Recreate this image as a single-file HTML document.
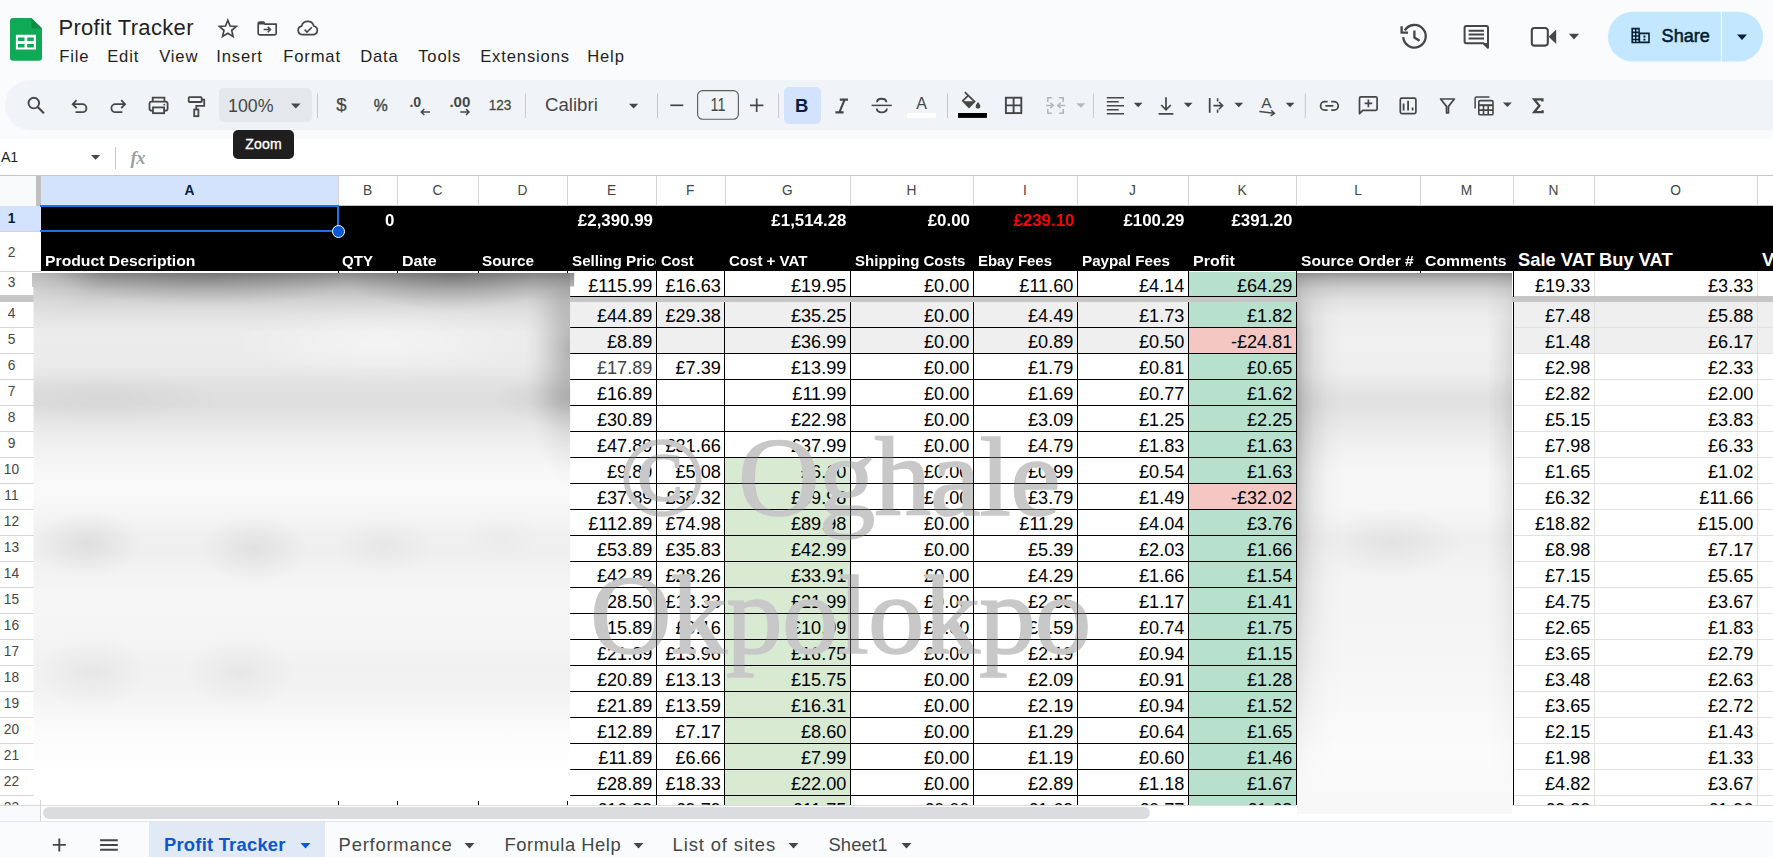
<!DOCTYPE html>
<html><head><meta charset="utf-8"><title>Profit Tracker</title>
<style>
*{box-sizing:border-box;margin:0;padding:0}
html,body{width:1773px;height:857px;overflow:hidden;background:#f9fbfd;font-family:"Liberation Sans",sans-serif;color:#1f1f1f}
body{position:relative}
.abs{position:absolute}
#title{position:absolute;left:58.4px;top:14px;font-size:22px;line-height:28px;color:#1f1f1f;letter-spacing:.33px;white-space:nowrap}
.menu{position:absolute;top:45.6px;margin-left:-.8px;letter-spacing:.85px;font-size:16.6px;line-height:22px;color:#1f1f1f;white-space:nowrap}
#toolbar{position:absolute;left:5px;top:80px;width:1800px;height:50px;border-radius:25px;background:#f0f4f9}
.tsep{position:absolute;top:93px;width:1px;height:25px;background:#c7c7c7}
.ttxt{position:absolute;font-size:17.5px;line-height:22px;color:#444746;white-space:nowrap}
svg.ic{position:absolute;overflow:visible}
#fbar{position:absolute;left:0;top:139px;width:1773px;height:37px;background:#fff}
#grid{position:absolute;left:0;top:0;width:1773px;height:805px;overflow:hidden;clip-path:inset(175px 0 0 0)}
#gridbg{position:absolute;left:0;top:175px;width:1773px;height:630px;background:#fff}
.chdr-bg{position:absolute;left:0;top:175px;width:1773px;height:31px;background:#fff;border-top:1px solid #c7c7c7;border-bottom:1px solid #c7c7c7}
.ch{position:absolute;top:176px;height:29px;line-height:30.5px;text-align:center;font-size:13.75px;color:#444746}
.ch.sel{background:#d3e3fd;color:#041e49;font-weight:bold}
.rh{position:absolute;left:0;width:41px;text-align:center;font-size:13.75px;color:#444746;background:#fff;padding-right:18px}
.rh.sel{background:#d3e3fd;color:#041e49;font-weight:bold}
.vl{position:absolute;width:1px;background:#d5d5d5}
.hl{position:absolute;height:1px;background:#d5d5d5}
.bl{position:absolute;background:#000}
.blk{position:absolute;background:#000}
.bg{position:absolute}
.c{position:absolute;text-align:right;padding-right:3.7px;font-size:18.1px;color:#000;white-space:nowrap;overflow:hidden}
.h1{position:absolute;top:205.5px;height:25px;line-height:30px;text-align:right;font-weight:bold;color:#fff;font-size:16.9px;white-space:nowrap}
.h2{position:absolute;top:246px;height:25px;line-height:30px;font-weight:bold;color:#fff;font-size:16px;white-space:nowrap;overflow:hidden;}
.h2 span{display:inline-block;transform-origin:0 78%}.h1 span{display:inline-block;transform-origin:100% 78%}
.h2a{position:absolute;top:245px;height:26px;line-height:29px;font-weight:bold;color:#fff;font-size:18.33px;white-space:nowrap}
.blur{position:absolute;overflow:hidden;background:#f1f1f1}
.bb{position:absolute}
.wm{position:absolute;font-family:"Liberation Serif",serif;font-size:113px;line-height:124px;color:#c8c8c8;-webkit-text-stroke:1.7px #c8c8c8;white-space:nowrap}
.frz{position:absolute;left:0;top:296.4px;width:1773px;height:5.3px;background:#c6c6c6}
.tab{position:absolute;top:822px;height:35px;font-size:18.4px;line-height:45px;color:#444746;white-space:nowrap;font-weight:bold}
</style></head><body>

<!-- ===== header ===== -->
<svg class="ic" style="left:10.1px;top:18.4px" width="32" height="42.8" viewBox="0 0 32 42.8">
<path d="M3 0h18.4L32 10.6v29.2a3 3 0 0 1-3 3H3a3 3 0 0 1-3-3V3a3 3 0 0 1 3-3z" fill="#10a955"/>
<path d="M21.4 0L32 10.6H24a2.6 2.6 0 0 1-2.6-2.6z" fill="#0a8c43"/>
<path d="M5.9 16.8h20.1v14.8H5.900000000000001z M7.9 19.6v3.4h6.6v-3.4z M17.2 19.6v3.4h6.6v-3.4z M7.9 25.9v3.5h6.6v-3.5z M17.2 25.9v3.5h6.6v-3.5z" fill="#fff" fill-rule="evenodd"/>
</svg>
<div id="title">Profit Tracker</div>
<div class="menu" style="left:60px">File</div>
<div class="menu" style="left:108px">Edit</div>
<div class="menu" style="left:160px">View</div>
<div class="menu" style="left:217px">Insert</div>
<div class="menu" style="left:284px">Format</div>
<div class="menu" style="left:361px">Data</div>
<div class="menu" style="left:419px">Tools</div>
<div class="menu" style="left:481px">Extensions</div>
<div class="menu" style="left:588px">Help</div>
<svg class="ic" style="left:0;top:0" width="1773" height="78" viewBox="0 0 1773 78" fill="none" stroke="#444746" stroke-width="1.8" font-family="Liberation Sans, sans-serif">
<!-- star -->
<path d="M227.8 20.3L230.2 26.0L236.3 26.4L231.7 30.4L233.1 36.4L227.8 33.2L222.6 36.4L224.0 30.4L219.4 26.4L225.5 26.0Z" stroke-width="1.7" stroke-linejoin="miter"/>
<!-- folder move -->
<path d="M264.8 24.1H276.2V33.2A1.6 1.6 0 0 1 274.6 34.8H259.8A1.6 1.6 0 0 1 258.2 33.2V23.6A1.6 1.6 0 0 1 259.8 22H263.6Z" stroke-width="1.7" stroke-linejoin="round"/><path d="M258.4 22h5.6l1.4 2.4h-7z" fill="#444746" stroke="none"/>
<path d="M263.6 29.6H270.2M267.8 26.9L270.5 29.6L267.8 32.3" stroke-width="1.5"/>
<!-- cloud done -->
<path d="M302.2 34.6A4.3 4.3 0 0 1 301.6 26.1A6.3 6.3 0 0 1 313.8 26A4.4 4.4 0 0 1 313.8 34.6Z" stroke-width="1.7" stroke-linejoin="round"/><path d="M304.6 29.6L307 32L311.8 27.2" stroke-width="1.6"/>
<!-- history -->
<g transform="translate(0,1.2)"><path d="M1404.8 29.2A11.3 11.3 0 1 1 1403.2 36" stroke-width="2.3"/><path d="M1401.6 25V31.4H1408" stroke-width="2.3"/><path d="M1414.4 29.4V36.4L1419.6 39.6" stroke-width="2.3"/></g>
<!-- comments -->
<path d="M1488 47.8L1483.4 43.2H1466.2A1.6 1.6 0 0 1 1464.6 41.6V27.6A1.6 1.6 0 0 1 1466.2 26H1486.4A1.6 1.6 0 0 1 1488 27.6Z" stroke-width="2" stroke-linejoin="round"/><path d="M1468.6 30.7H1484M1468.6 34.6H1484M1468.6 38.5H1484" stroke-width="2"/><path d="M1488 48.6V43h-5.4z" fill="#444746" stroke="none"/>
<!-- video -->
<path d="M1531.8 30.6A2.6 2.6 0 0 1 1534.4 28H1545.2A2.6 2.6 0 0 1 1547.8 30.6V43A2.6 2.6 0 0 1 1545.2 45.600000000000001H1534.4A2.6 2.6 0 0 1 1531.8 43Z" stroke-width="2.1"/><path d="M1548.6 36.8L1556.2 29.6V44Z" fill="#444746" stroke="none"/>
<path d="M1568.9 33.8h10.2l-5.1 5.6z" fill="#444746" stroke="none"/>
<!-- share -->
<rect x="1608" y="11.8" width="155" height="49.8" rx="24.9" fill="#c2e7ff" stroke="none"/>
<path d="M1721.4 11.8V61.6" stroke="#f9fbfd" stroke-width="1.2"/>
<path d="M1737 34.4h10l-5 5.5z" fill="#001d35" stroke="none"/>
<g fill="#001d35" stroke="none"><path d="M1631.4 27.8h8.4v4.6h10v10.8h-18.4z M1633 29.6v2h2v-2z M1636.4 29.6v2h2v-2z M1633 33.2v2h2v-2z M1636.4 33.2v2h2v-2z M1633 36.800000000000004v2h2v-2z M1636.4 36.800000000000004v2h2v-2z M1633 40.2v1.6h2v-1.6z M1636.4 40.2v1.6h2v-1.6z M1640.2 34.2v7.4h8v-7.4z" fill-rule="evenodd"/><path d="M1643.400000000000001 35.6h2v1.8h-2z M1643.4 38.8h2v1.8h-2z"/></g>
<text x="1661.6" y="41.8" font-size="17.5" fill="#001d35" stroke="#001d35" stroke-width=".55" textLength="48.2" lengthAdjust="spacingAndGlyphs">Share</text>
</svg>


<!-- ===== toolbar ===== -->
<div id="toolbar"></div>
<svg class="ic" style="left:0;top:0" width="1773" height="180" viewBox="0 0 1773 180" fill="none" stroke="#444746" stroke-width="1.8" font-family="Liberation Sans, sans-serif">
<!-- search -->
<circle cx="33.8" cy="103.1" r="5.3" stroke-width="1.9"/><path d="M37.7 107.1L43.9 113.3" stroke-width="2.1"/>
<!-- undo -->
<path d="M76.6 100.2L72.7 104.2L76.6 108.2M73 104.2H82.4A4 4 0 0 1 82.4 112.2H75.5"/>
<!-- redo -->
<path d="M121.2 100.2L125.1 104.2L121.2 108.2M124.8 104.2H115.4A4 4 0 0 0 115.4 112.2H122.3"/>
<!-- print -->
<path d="M152.7 101.5V97.6H164.4V101.5"/><rect x="149.5" y="101.6" width="18.1" height="9" rx="2.2"/><rect x="153" y="107.4" width="11.1" height="5.8" fill="#f0f4f9"/><circle cx="164.3" cy="104.6" r="0.9" fill="#444746" stroke="none"/>
<!-- paint format -->
<rect x="188.7" y="97.2" width="13" height="4.8" rx="0.8"/><path d="M201.7 99.6H204.2V105.8H196.3V109.5"/><rect x="194.2" y="109.5" width="4.2" height="6.7"/>
<!-- zoom box -->
<rect x="219" y="88" width="93" height="34" rx="5" fill="#e4e8ed" stroke="none"/>
<text x="228" y="111.8" font-size="17.5" fill="#444746" stroke="none" textLength="45.5" lengthAdjust="spacingAndGlyphs">100%</text>
<path d="M291 103.5h9.6l-4.8 5z" fill="#444746" stroke="none"/>
<path d="M317.5 93.5V118" stroke="#c7c7c7" stroke-width="1"/>
<!-- $ % -->
<text x="341.4" y="111.4" font-size="18.6" fill="#444746" stroke="#444746" stroke-width=".2" text-anchor="middle">$</text>
<text x="380.7" y="111.2" font-size="16.5" fill="#444746" stroke="#444746" stroke-width=".4" text-anchor="middle" textLength="14" lengthAdjust="spacingAndGlyphs">%</text>
<text x="409.4" y="107" font-size="14.5" font-weight="bold" fill="#444746" stroke="none" textLength="11.8" lengthAdjust="spacingAndGlyphs">.0</text>
<path d="M430 112H421.3M424.3 109L421.3 112L424.3 115" stroke-width="1.5"/>
<text x="449.4" y="107" font-size="14.5" font-weight="bold" fill="#444746" stroke="none" textLength="21" lengthAdjust="spacingAndGlyphs">.00</text>
<path d="M460.3 112H469M466 109L469 112L466 115" stroke-width="1.5"/>
<text x="488.8" y="109.8" font-size="14.5" fill="#444746" stroke="#444746" stroke-width="0.3" textLength="22.6" lengthAdjust="spacingAndGlyphs">123</text>
<path d="M525.4 93.5V118" stroke="#c7c7c7" stroke-width="1"/>
<text x="545" y="111" font-size="17.5" fill="#444746" stroke="none" textLength="52.8" lengthAdjust="spacingAndGlyphs">Calibri</text>
<path d="M629 103.7h9.2l-4.6 4.8z" fill="#444746" stroke="none"/>
<path d="M657.5 93.5V118" stroke="#c7c7c7" stroke-width="1"/>
<!-- font size -->
<path d="M670.3 105.3H683.3" stroke-width="1.7"/>
<rect x="697.6" y="90.6" width="40.8" height="28.6" rx="5" stroke-width="1.15" stroke="#5b5e5d" fill="#f0f4f9"/>
<text x="718" y="110.8" font-size="17.5" fill="#444746" stroke="none" text-anchor="middle" textLength="15" lengthAdjust="spacingAndGlyphs">11</text>
<path d="M750 105.3H763.4M756.7 98.6V112" stroke-width="1.7"/>
<path d="M778.6 93.5V118" stroke="#c7c7c7" stroke-width="1"/>
<!-- B I S A -->
<rect x="784" y="87" width="37" height="37" rx="5" fill="#d3e3fd" stroke="none"/>
<text x="801.6" y="112" font-size="18.5" font-weight="bold" fill="#041e49" stroke="none" text-anchor="middle">B</text>
<path d="M839.8 99.6H848M835.4 112.4H843.6M844.6 99.6L839.4 112.4" stroke-width="2.1"/>
<path d="M871.6 105.4H891.8" stroke-width="1.5"/><path d="M886.4 102.2C886.2 97.6 877 97.6 877 102.2M876.8 108.6C876.8 113.6 886.9 113.6 886.9 108.6" stroke-width="1.9"/>
<text x="921.6" y="109.2" font-size="16" fill="#444746" stroke="none" text-anchor="middle">A</text>
<rect x="907" y="113" width="29" height="5" fill="#fff" stroke="none"/>
<path d="M947.5 93.5V118" stroke="#c7c7c7" stroke-width="1"/>
<!-- fill -->
<path d="M964.8 92.2L974.6 101.6L969 107.2L962.8 100.8L968.6 95.2" stroke-width="1.7"/><path d="M963 101.2H974.6L969 107z" fill="#444746" stroke="none"/>
<path d="M978 102c1.5 1.9 2.4 3.2 2.4 4.3a2.4 2.4 0 0 1-4.8 0c0-1.1.9-2.4 2.400000000000002-4.3z" fill="#444746" stroke="none"/>
<rect x="958" y="113" width="29" height="4.9" fill="#000" stroke="none"/>
<!-- borders -->
<rect x="1005.9" y="97.7" width="15.4" height="15.4" stroke-width="1.9"/><path d="M1013.6 97.7V113.1M1005.9 105.4H1021.3" stroke-width="1.9"/>
<!-- merge (disabled) -->
<g stroke="#b3b7bb" stroke-width="1.6"><path d="M1052 97.8H1047.8V102M1047.8 109V113.2H1052M1059 97.8H1063.2V102M1063.2 109V113.2H1059M1046 105.5H1053.2M1050.4 102.7L1053.2 105.5L1050.4 108.3M1065 105.5H1057.8M1060.6 102.7L1057.8 105.5L1060.6 108.3"/></g>
<path d="M1076.3 103.2h9l-4.5 4.6z" fill="#b3b7bb" stroke="none"/>
<path d="M1093.4 93.5V118" stroke="#c7c7c7" stroke-width="1"/>
<!-- align -->
<path d="M1106.8 97.7H1124M1106.8 101.8H1118.7M1106.8 105.8H1124M1106.8 109.8H1118.7M1106.8 113.8H1124" stroke-width="1.5"/>
<path d="M1133.8 102.8h8.8l-4.4 4.5z" fill="#444746" stroke="none"/>
<!-- valign -->
<path d="M1166 97.2V109.6M1161.2 105L1166 109.8L1170.8 105M1158.6 113.8H1173.4" stroke-width="1.7"/>
<path d="M1183.8 102.8h8.8l-4.4 4.5z" fill="#444746" stroke="none"/>
<!-- wrap overflow -->
<path d="M1209.7 98V112.8" stroke-width="1.8"/><path d="M1213.4 105.6H1222.4M1219 102L1222.6 105.6L1219 109.2M1217.6 98.2V101.6M1217.6 109.4V112.8" stroke-width="1.6"/>
<path d="M1234.4 102.8h8.8l-4.4 4.5z" fill="#444746" stroke="none"/>
<!-- rotate -->
<text x="1266.5" y="108.2" font-size="15.5" fill="#444746" stroke="none" text-anchor="middle">A</text>
<path d="M1259.4 111.4L1274 113.2M1271.2 110.2L1274.4 113.3L1270.6 115.8" stroke-width="1.5"/>
<path d="M1285.7 102.8h8.8l-4.4 4.5z" fill="#444746" stroke="none"/>
<path d="M1305.3 93.5V118" stroke="#c7c7c7" stroke-width="1"/>
<!-- link -->
<path d="M1327.6 101.7H1324.8A4.2 4.2 0 0 0 1324.8 110.1H1327.6M1331.2 101.7H1334A4.2 4.2 0 0 1 1334 110.1H1331.2M1325.4 105.9H1333.4" stroke-width="1.8"/>
<!-- add comment -->
<path d="M1359.5 113.6V98.4A1.5 1.5 0 0 1 1361 96.9H1375.6A1.5 1.5 0 0 1 1377.1 98.4V108.8A1.5 1.5 0 0 1 1375.6 110.3H1362.8Z" stroke-width="1.7" stroke-linejoin="round"/><path d="M1364.6 103.4H1372.2M1368.4 99.6V107.2" stroke-width="1.7"/>
<!-- chart -->
<rect x="1400.3" y="98.2" width="15.6" height="15.4" rx="1.6" stroke-width="1.7"/><path d="M1403.6 103.4V110.6M1408.1 100.8V110.6M1412.6 107.4V110.6" stroke-width="1.8"/>
<!-- filter -->
<path d="M1440.6 99H1454.4L1448.5 106.4V112.8H1446.5V106.4Z" stroke-width="1.7" stroke-linejoin="round"/>
<!-- table -->
<path d="M1475.1 108.6V98.4A1.4 1.4 0 0 1 1476.5 97H1489.4" stroke-width="1.5"/><rect x="1478.8" y="100.6" width="14.2" height="14.2" rx="1.4" stroke-width="1.6"/><path d="M1478.8 105.2H1493" stroke-width="2"/><path d="M1478.8 110.1H1493M1483.5 105.2V114.8M1488.2 105.2V114.8" stroke-width="1.6"/>
<path d="M1502.9 102.6h9l-4.5 4.5z" fill="#444746" stroke="none"/>
<!-- sigma -->
<path d="M1542.4 101.4V99.4H1534.2L1539.4 105.8L1534.2 112.2H1542.6V110.2" stroke-width="2.3" stroke-linejoin="miter"/>
</svg>
<div class="abs" style="z-index:5;left:233px;top:129.5px;width:61px;height:29.5px;border-radius:5px;background:#1f1f1f"></div>
<div class="abs" style="z-index:6;left:233px;top:129.5px;width:61px;height:29.5px;line-height:29.5px;text-align:center;color:#fff;font-size:14px;-webkit-text-stroke:.35px #fff;letter-spacing:.2px"><span style="display:inline-block">Zoom</span></div>


<!-- ===== formula bar ===== -->
<div id="fbar"></div>
<div class="abs" style="left:1px;top:147px;letter-spacing:-.4px;font-size:14.3px;line-height:20px;color:#1f1f1f">A1</div>
<svg class="ic" style="left:90.6px;top:155px" width="9.2" height="4.8" viewBox="0 0 9.2 4.8"><path d="M0 0h9.2L4.6 4.8z" fill="#444746"/></svg>
<div class="abs" style="left:115px;top:147px;width:1px;height:22px;background:#c7c7c7"></div>
<div class="abs" style="left:130.4px;top:147px;font-family:'Liberation Serif',serif;font-style:italic;font-size:18.5px;line-height:22px;color:#9aa0a6;font-weight:bold;letter-spacing:-.2px">fx</div>

<!-- ===== grid ===== -->
<div id="gridbg"></div>
<div id="grid">
<div class="chdr-bg"></div>
<div class="ch sel" style="left:41px;width:297px">A</div>
<div class="ch" style="left:338px;width:59px">B</div>
<div class="ch" style="left:397px;width:81px">C</div>
<div class="ch" style="left:478px;width:89px">D</div>
<div class="ch" style="left:567px;width:89px">E</div>
<div class="ch" style="left:656px;width:68.5px">F</div>
<div class="ch" style="left:724.5px;width:125.5px">G</div>
<div class="ch" style="left:850px;width:123px">H</div>
<div class="ch" style="left:973px;width:104px">I</div>
<div class="ch" style="left:1077px;width:111px">J</div>
<div class="ch" style="left:1188px;width:108px">K</div>
<div class="ch" style="left:1296px;width:124px">L</div>
<div class="ch" style="left:1420px;width:93px">M</div>
<div class="ch" style="left:1513px;width:81px">N</div>
<div class="ch" style="left:1594px;width:163px">O</div>
<div class="vl" style="left:338px;top:176px;height:30px"></div>
<div class="vl" style="left:397px;top:176px;height:30px"></div>
<div class="vl" style="left:478px;top:176px;height:30px"></div>
<div class="vl" style="left:567px;top:176px;height:30px"></div>
<div class="vl" style="left:656px;top:176px;height:30px"></div>
<div class="vl" style="left:724.5px;top:176px;height:30px"></div>
<div class="vl" style="left:850px;top:176px;height:30px"></div>
<div class="vl" style="left:973px;top:176px;height:30px"></div>
<div class="vl" style="left:1077px;top:176px;height:30px"></div>
<div class="vl" style="left:1188px;top:176px;height:30px"></div>
<div class="vl" style="left:1296px;top:176px;height:30px"></div>
<div class="vl" style="left:1420px;top:176px;height:30px"></div>
<div class="vl" style="left:1513px;top:176px;height:30px"></div>
<div class="vl" style="left:1594px;top:176px;height:30px"></div>
<div class="vl" style="left:1757px;top:176px;height:30px"></div>
<div class="vl" style="left:1800px;top:176px;height:30px"></div>
<div class="bg" style="left:0;top:176px;width:36.5px;height:29.5px;background:#f8f9fa"></div>
<div class="bg" style="left:36.4px;top:176px;width:4.4px;height:29.5px;background:#c0c0c0"></div>
<div class="rh sel" style="top:205.5px;height:26.0px;line-height:25.4px">1</div>
<div class="hl" style="left:0;width:41px;top:231px"></div>
<div class="rh" style="top:231.5px;height:40.0px;line-height:41.0px">2</div>
<div class="hl" style="left:0;width:41px;top:271px"></div>
<div class="rh" style="top:271.5px;height:25.5px;line-height:21.0px">3</div>
<div class="hl" style="left:0;width:41px;top:296px"></div>
<div class="rh" style="top:302.0px;height:26.0px;line-height:23.5px">4</div>
<div class="hl" style="left:0;width:41px;top:327px"></div>
<div class="rh" style="top:328.0px;height:26.0px;line-height:23.5px">5</div>
<div class="hl" style="left:0;width:41px;top:353px"></div>
<div class="rh" style="top:354.0px;height:26.0px;line-height:23.5px">6</div>
<div class="hl" style="left:0;width:41px;top:379px"></div>
<div class="rh" style="top:380.0px;height:26.0px;line-height:23.5px">7</div>
<div class="hl" style="left:0;width:41px;top:405px"></div>
<div class="rh" style="top:406.0px;height:26.0px;line-height:23.5px">8</div>
<div class="hl" style="left:0;width:41px;top:431px"></div>
<div class="rh" style="top:432.0px;height:26.0px;line-height:23.5px">9</div>
<div class="hl" style="left:0;width:41px;top:457px"></div>
<div class="rh" style="top:458.0px;height:26.0px;line-height:23.5px">10</div>
<div class="hl" style="left:0;width:41px;top:483px"></div>
<div class="rh" style="top:484.0px;height:26.0px;line-height:23.5px">11</div>
<div class="hl" style="left:0;width:41px;top:509px"></div>
<div class="rh" style="top:510.0px;height:26.0px;line-height:23.5px">12</div>
<div class="hl" style="left:0;width:41px;top:535px"></div>
<div class="rh" style="top:536.0px;height:26.0px;line-height:23.5px">13</div>
<div class="hl" style="left:0;width:41px;top:561px"></div>
<div class="rh" style="top:562.0px;height:26.0px;line-height:23.5px">14</div>
<div class="hl" style="left:0;width:41px;top:587px"></div>
<div class="rh" style="top:588.0px;height:26.0px;line-height:23.5px">15</div>
<div class="hl" style="left:0;width:41px;top:613px"></div>
<div class="rh" style="top:614.0px;height:26.0px;line-height:23.5px">16</div>
<div class="hl" style="left:0;width:41px;top:639px"></div>
<div class="rh" style="top:640.0px;height:26.0px;line-height:23.5px">17</div>
<div class="hl" style="left:0;width:41px;top:665px"></div>
<div class="rh" style="top:666.0px;height:26.0px;line-height:23.5px">18</div>
<div class="hl" style="left:0;width:41px;top:691px"></div>
<div class="rh" style="top:692.0px;height:26.0px;line-height:23.5px">19</div>
<div class="hl" style="left:0;width:41px;top:717px"></div>
<div class="rh" style="top:718.0px;height:26.0px;line-height:23.5px">20</div>
<div class="hl" style="left:0;width:41px;top:743px"></div>
<div class="rh" style="top:744.0px;height:26.0px;line-height:23.5px">21</div>
<div class="hl" style="left:0;width:41px;top:769px"></div>
<div class="rh" style="top:770.0px;height:26.0px;line-height:23.5px">22</div>
<div class="hl" style="left:0;width:41px;top:795px"></div>
<div class="rh" style="top:796.0px;height:26.0px;line-height:23.5px">23</div>
<div class="hl" style="left:0;width:41px;top:821px"></div>
<div class="blk" style="left:41px;top:206px;width:1740px;height:65px"></div>
<div class="bg" style="left:1188px;top:271.5px;width:108px;height:25.5px;background:#b7e1cd"></div>
<div class="bg" style="left:567px;top:302.0px;width:89px;height:26.0px;background:#efefef"></div>
<div class="bg" style="left:656px;top:302.0px;width:68.5px;height:26.0px;background:#efefef"></div>
<div class="bg" style="left:724.5px;top:302.0px;width:125.5px;height:26.0px;background:#efefef"></div>
<div class="bg" style="left:850px;top:302.0px;width:123px;height:26.0px;background:#efefef"></div>
<div class="bg" style="left:973px;top:302.0px;width:104px;height:26.0px;background:#efefef"></div>
<div class="bg" style="left:1077px;top:302.0px;width:111px;height:26.0px;background:#efefef"></div>
<div class="bg" style="left:1188px;top:302.0px;width:108px;height:26.0px;background:#b7e1cd"></div>
<div class="bg" style="left:1513px;top:302.0px;width:81px;height:26.0px;background:#efefef"></div>
<div class="bg" style="left:1594px;top:302.0px;width:163px;height:26.0px;background:#efefef"></div>
<div class="bg" style="left:567px;top:328.0px;width:89px;height:26.0px;background:#efefef"></div>
<div class="bg" style="left:656px;top:328.0px;width:68.5px;height:26.0px;background:#efefef"></div>
<div class="bg" style="left:724.5px;top:328.0px;width:125.5px;height:26.0px;background:#efefef"></div>
<div class="bg" style="left:850px;top:328.0px;width:123px;height:26.0px;background:#efefef"></div>
<div class="bg" style="left:973px;top:328.0px;width:104px;height:26.0px;background:#efefef"></div>
<div class="bg" style="left:1077px;top:328.0px;width:111px;height:26.0px;background:#efefef"></div>
<div class="bg" style="left:1188px;top:328.0px;width:108px;height:26.0px;background:#f4c7c3"></div>
<div class="bg" style="left:1513px;top:328.0px;width:81px;height:26.0px;background:#efefef"></div>
<div class="bg" style="left:1594px;top:328.0px;width:163px;height:26.0px;background:#efefef"></div>
<div class="bg" style="left:1188px;top:354.0px;width:108px;height:26.0px;background:#b7e1cd"></div>
<div class="bg" style="left:1188px;top:380.0px;width:108px;height:26.0px;background:#b7e1cd"></div>
<div class="bg" style="left:1188px;top:406.0px;width:108px;height:26.0px;background:#b7e1cd"></div>
<div class="bg" style="left:1188px;top:432.0px;width:108px;height:26.0px;background:#b7e1cd"></div>
<div class="bg" style="left:724.5px;top:458.0px;width:125.5px;height:26.0px;background:#d9ead3"></div>
<div class="bg" style="left:1188px;top:458.0px;width:108px;height:26.0px;background:#b7e1cd"></div>
<div class="bg" style="left:724.5px;top:484.0px;width:125.5px;height:26.0px;background:#d9ead3"></div>
<div class="bg" style="left:1188px;top:484.0px;width:108px;height:26.0px;background:#f4c7c3"></div>
<div class="bg" style="left:724.5px;top:510.0px;width:125.5px;height:26.0px;background:#d9ead3"></div>
<div class="bg" style="left:1188px;top:510.0px;width:108px;height:26.0px;background:#b7e1cd"></div>
<div class="bg" style="left:724.5px;top:536.0px;width:125.5px;height:26.0px;background:#d9ead3"></div>
<div class="bg" style="left:1188px;top:536.0px;width:108px;height:26.0px;background:#b7e1cd"></div>
<div class="bg" style="left:724.5px;top:562.0px;width:125.5px;height:26.0px;background:#d9ead3"></div>
<div class="bg" style="left:1188px;top:562.0px;width:108px;height:26.0px;background:#b7e1cd"></div>
<div class="bg" style="left:724.5px;top:588.0px;width:125.5px;height:26.0px;background:#d9ead3"></div>
<div class="bg" style="left:1188px;top:588.0px;width:108px;height:26.0px;background:#b7e1cd"></div>
<div class="bg" style="left:724.5px;top:614.0px;width:125.5px;height:26.0px;background:#d9ead3"></div>
<div class="bg" style="left:1188px;top:614.0px;width:108px;height:26.0px;background:#b7e1cd"></div>
<div class="bg" style="left:724.5px;top:640.0px;width:125.5px;height:26.0px;background:#d9ead3"></div>
<div class="bg" style="left:1188px;top:640.0px;width:108px;height:26.0px;background:#b7e1cd"></div>
<div class="bg" style="left:724.5px;top:666.0px;width:125.5px;height:26.0px;background:#d9ead3"></div>
<div class="bg" style="left:1188px;top:666.0px;width:108px;height:26.0px;background:#b7e1cd"></div>
<div class="bg" style="left:724.5px;top:692.0px;width:125.5px;height:26.0px;background:#d9ead3"></div>
<div class="bg" style="left:1188px;top:692.0px;width:108px;height:26.0px;background:#b7e1cd"></div>
<div class="bg" style="left:724.5px;top:718.0px;width:125.5px;height:26.0px;background:#d9ead3"></div>
<div class="bg" style="left:1188px;top:718.0px;width:108px;height:26.0px;background:#b7e1cd"></div>
<div class="bg" style="left:724.5px;top:744.0px;width:125.5px;height:26.0px;background:#d9ead3"></div>
<div class="bg" style="left:1188px;top:744.0px;width:108px;height:26.0px;background:#b7e1cd"></div>
<div class="bg" style="left:724.5px;top:770.0px;width:125.5px;height:26.0px;background:#d9ead3"></div>
<div class="bg" style="left:1188px;top:770.0px;width:108px;height:26.0px;background:#b7e1cd"></div>
<div class="bg" style="left:724.5px;top:796.0px;width:125.5px;height:26.0px;background:#d9ead3"></div>
<div class="bg" style="left:1188px;top:796.0px;width:108px;height:26.0px;background:#b7e1cd"></div>
<div class="bg" style="left:1757px;top:302.0px;width:20px;height:26.0px;background:#efefef"></div>
<div class="bg" style="left:1757px;top:328.0px;width:20px;height:26.0px;background:#efefef"></div>
<div class="hl" style="left:1513px;width:270px;top:296px;background:#e1e1e1"></div>
<div class="hl" style="left:1513px;width:270px;top:327px;background:#e1e1e1"></div>
<div class="hl" style="left:1513px;width:270px;top:353px;background:#e1e1e1"></div>
<div class="hl" style="left:1513px;width:270px;top:379px;background:#e1e1e1"></div>
<div class="hl" style="left:1513px;width:270px;top:405px;background:#e1e1e1"></div>
<div class="hl" style="left:1513px;width:270px;top:431px;background:#e1e1e1"></div>
<div class="hl" style="left:1513px;width:270px;top:457px;background:#e1e1e1"></div>
<div class="hl" style="left:1513px;width:270px;top:483px;background:#e1e1e1"></div>
<div class="hl" style="left:1513px;width:270px;top:509px;background:#e1e1e1"></div>
<div class="hl" style="left:1513px;width:270px;top:535px;background:#e1e1e1"></div>
<div class="hl" style="left:1513px;width:270px;top:561px;background:#e1e1e1"></div>
<div class="hl" style="left:1513px;width:270px;top:587px;background:#e1e1e1"></div>
<div class="hl" style="left:1513px;width:270px;top:613px;background:#e1e1e1"></div>
<div class="hl" style="left:1513px;width:270px;top:639px;background:#e1e1e1"></div>
<div class="hl" style="left:1513px;width:270px;top:665px;background:#e1e1e1"></div>
<div class="hl" style="left:1513px;width:270px;top:691px;background:#e1e1e1"></div>
<div class="hl" style="left:1513px;width:270px;top:717px;background:#e1e1e1"></div>
<div class="hl" style="left:1513px;width:270px;top:743px;background:#e1e1e1"></div>
<div class="hl" style="left:1513px;width:270px;top:769px;background:#e1e1e1"></div>
<div class="hl" style="left:1513px;width:270px;top:795px;background:#e1e1e1"></div>
<div class="hl" style="left:1513px;width:270px;top:821px;background:#e1e1e1"></div>
<div class="vl" style="left:1594px;top:271px;height:540px;background:#e1e1e1"></div>
<div class="vl" style="left:1757px;top:271px;height:540px;background:#e1e1e1"></div>
<div class="frz"></div>
<div class="bg" style="left:0;top:295.4px;width:34px;height:2px;background:#c6c6c6"></div>
<div class="bl" style="left:567px;width:730px;top:296px;height:1px"></div>
<div class="bl" style="left:567px;width:730px;top:327px;height:1px"></div>
<div class="bl" style="left:567px;width:730px;top:353px;height:1px"></div>
<div class="bl" style="left:567px;width:730px;top:379px;height:1px"></div>
<div class="bl" style="left:567px;width:730px;top:405px;height:1px"></div>
<div class="bl" style="left:567px;width:730px;top:431px;height:1px"></div>
<div class="bl" style="left:567px;width:730px;top:457px;height:1px"></div>
<div class="bl" style="left:567px;width:730px;top:483px;height:1px"></div>
<div class="bl" style="left:567px;width:730px;top:509px;height:1px"></div>
<div class="bl" style="left:567px;width:730px;top:535px;height:1px"></div>
<div class="bl" style="left:567px;width:730px;top:561px;height:1px"></div>
<div class="bl" style="left:567px;width:730px;top:587px;height:1px"></div>
<div class="bl" style="left:567px;width:730px;top:613px;height:1px"></div>
<div class="bl" style="left:567px;width:730px;top:639px;height:1px"></div>
<div class="bl" style="left:567px;width:730px;top:665px;height:1px"></div>
<div class="bl" style="left:567px;width:730px;top:691px;height:1px"></div>
<div class="bl" style="left:567px;width:730px;top:717px;height:1px"></div>
<div class="bl" style="left:567px;width:730px;top:743px;height:1px"></div>
<div class="bl" style="left:567px;width:730px;top:769px;height:1px"></div>
<div class="bl" style="left:567px;width:730px;top:795px;height:1px"></div>
<div class="bl" style="left:567px;width:730px;top:821px;height:1px"></div>
<div class="bl" style="left:567px;top:271px;width:1px;height:26px"></div>
<div class="bl" style="left:567px;top:301.7px;width:1px;height:510px"></div>
<div class="bl" style="left:656px;top:271px;width:1px;height:26px"></div>
<div class="bl" style="left:656px;top:301.7px;width:1px;height:510px"></div>
<div class="bl" style="left:724px;top:271px;width:1px;height:26px"></div>
<div class="bl" style="left:724px;top:301.7px;width:1px;height:510px"></div>
<div class="bl" style="left:850px;top:271px;width:1px;height:26px"></div>
<div class="bl" style="left:850px;top:301.7px;width:1px;height:510px"></div>
<div class="bl" style="left:973px;top:271px;width:1px;height:26px"></div>
<div class="bl" style="left:973px;top:301.7px;width:1px;height:510px"></div>
<div class="bl" style="left:1077px;top:271px;width:1px;height:26px"></div>
<div class="bl" style="left:1077px;top:301.7px;width:1px;height:510px"></div>
<div class="bl" style="left:1188px;top:271px;width:1px;height:26px"></div>
<div class="bl" style="left:1188px;top:301.7px;width:1px;height:510px"></div>
<div class="bl" style="left:1296px;top:271px;width:1px;height:26px"></div>
<div class="bl" style="left:1296px;top:301.7px;width:1px;height:510px"></div>
<div class="bl" style="left:1512.8px;top:271px;width:1.2px;height:26px"></div>
<div class="bl" style="left:1512.8px;top:301.7px;width:1.2px;height:510px"></div>
<div class="c" style="left:567px;top:271.5px;width:89px;height:25.5px;line-height:28.1px">£115.99</div>
<div class="c" style="left:656px;top:271.5px;width:68.5px;height:25.5px;line-height:28.1px">£16.63</div>
<div class="c" style="left:724.5px;top:271.5px;width:125.5px;height:25.5px;line-height:28.1px">£19.95</div>
<div class="c" style="left:850px;top:271.5px;width:123px;height:25.5px;line-height:28.1px">£0.00</div>
<div class="c" style="left:973px;top:271.5px;width:104px;height:25.5px;line-height:28.1px">£11.60</div>
<div class="c" style="left:1077px;top:271.5px;width:111px;height:25.5px;line-height:28.1px">£4.14</div>
<div class="c" style="left:1188px;top:271.5px;width:108px;height:25.5px;line-height:28.1px">£64.29</div>
<div class="c" style="left:1513px;top:271.5px;width:81px;height:25.5px;line-height:28.1px">£19.33</div>
<div class="c" style="left:1594px;top:271.5px;width:163px;height:25.5px;line-height:28.1px">£3.33</div>
<div class="c" style="left:567px;top:302.0px;width:89px;height:26.0px;line-height:28.6px">£44.89</div>
<div class="c" style="left:656px;top:302.0px;width:68.5px;height:26.0px;line-height:28.6px">£29.38</div>
<div class="c" style="left:724.5px;top:302.0px;width:125.5px;height:26.0px;line-height:28.6px">£35.25</div>
<div class="c" style="left:850px;top:302.0px;width:123px;height:26.0px;line-height:28.6px">£0.00</div>
<div class="c" style="left:973px;top:302.0px;width:104px;height:26.0px;line-height:28.6px">£4.49</div>
<div class="c" style="left:1077px;top:302.0px;width:111px;height:26.0px;line-height:28.6px">£1.73</div>
<div class="c" style="left:1188px;top:302.0px;width:108px;height:26.0px;line-height:28.6px">£1.82</div>
<div class="c" style="left:1513px;top:302.0px;width:81px;height:26.0px;line-height:28.6px">£7.48</div>
<div class="c" style="left:1594px;top:302.0px;width:163px;height:26.0px;line-height:28.6px">£5.88</div>
<div class="c" style="left:567px;top:328.0px;width:89px;height:26.0px;line-height:28.6px">£8.89</div>
<div class="c" style="left:724.5px;top:328.0px;width:125.5px;height:26.0px;line-height:28.6px">£36.99</div>
<div class="c" style="left:850px;top:328.0px;width:123px;height:26.0px;line-height:28.6px">£0.00</div>
<div class="c" style="left:973px;top:328.0px;width:104px;height:26.0px;line-height:28.6px">£0.89</div>
<div class="c" style="left:1077px;top:328.0px;width:111px;height:26.0px;line-height:28.6px">£0.50</div>
<div class="c" style="left:1188px;top:328.0px;width:108px;height:26.0px;line-height:28.6px">-£24.81</div>
<div class="c" style="left:1513px;top:328.0px;width:81px;height:26.0px;line-height:28.6px">£1.48</div>
<div class="c" style="left:1594px;top:328.0px;width:163px;height:26.0px;line-height:28.6px">£6.17</div>
<div class="c" style="left:567px;top:354.0px;width:89px;height:26.0px;line-height:28.6px;color:#434343">£17.89</div>
<div class="c" style="left:656px;top:354.0px;width:68.5px;height:26.0px;line-height:28.6px">£7.39</div>
<div class="c" style="left:724.5px;top:354.0px;width:125.5px;height:26.0px;line-height:28.6px">£13.99</div>
<div class="c" style="left:850px;top:354.0px;width:123px;height:26.0px;line-height:28.6px">£0.00</div>
<div class="c" style="left:973px;top:354.0px;width:104px;height:26.0px;line-height:28.6px">£1.79</div>
<div class="c" style="left:1077px;top:354.0px;width:111px;height:26.0px;line-height:28.6px">£0.81</div>
<div class="c" style="left:1188px;top:354.0px;width:108px;height:26.0px;line-height:28.6px">£0.65</div>
<div class="c" style="left:1513px;top:354.0px;width:81px;height:26.0px;line-height:28.6px">£2.98</div>
<div class="c" style="left:1594px;top:354.0px;width:163px;height:26.0px;line-height:28.6px">£2.33</div>
<div class="c" style="left:567px;top:380.0px;width:89px;height:26.0px;line-height:28.6px">£16.89</div>
<div class="c" style="left:724.5px;top:380.0px;width:125.5px;height:26.0px;line-height:28.6px">£11.99</div>
<div class="c" style="left:850px;top:380.0px;width:123px;height:26.0px;line-height:28.6px">£0.00</div>
<div class="c" style="left:973px;top:380.0px;width:104px;height:26.0px;line-height:28.6px">£1.69</div>
<div class="c" style="left:1077px;top:380.0px;width:111px;height:26.0px;line-height:28.6px">£0.77</div>
<div class="c" style="left:1188px;top:380.0px;width:108px;height:26.0px;line-height:28.6px">£1.62</div>
<div class="c" style="left:1513px;top:380.0px;width:81px;height:26.0px;line-height:28.6px">£2.82</div>
<div class="c" style="left:1594px;top:380.0px;width:163px;height:26.0px;line-height:28.6px">£2.00</div>
<div class="c" style="left:567px;top:406.0px;width:89px;height:26.0px;line-height:28.6px">£30.89</div>
<div class="c" style="left:724.5px;top:406.0px;width:125.5px;height:26.0px;line-height:28.6px">£22.98</div>
<div class="c" style="left:850px;top:406.0px;width:123px;height:26.0px;line-height:28.6px">£0.00</div>
<div class="c" style="left:973px;top:406.0px;width:104px;height:26.0px;line-height:28.6px">£3.09</div>
<div class="c" style="left:1077px;top:406.0px;width:111px;height:26.0px;line-height:28.6px">£1.25</div>
<div class="c" style="left:1188px;top:406.0px;width:108px;height:26.0px;line-height:28.6px">£2.25</div>
<div class="c" style="left:1513px;top:406.0px;width:81px;height:26.0px;line-height:28.6px">£5.15</div>
<div class="c" style="left:1594px;top:406.0px;width:163px;height:26.0px;line-height:28.6px">£3.83</div>
<div class="c" style="left:567px;top:432.0px;width:89px;height:26.0px;line-height:28.6px">£47.89</div>
<div class="c" style="left:656px;top:432.0px;width:68.5px;height:26.0px;line-height:28.6px">£31.66</div>
<div class="c" style="left:724.5px;top:432.0px;width:125.5px;height:26.0px;line-height:28.6px">£37.99</div>
<div class="c" style="left:850px;top:432.0px;width:123px;height:26.0px;line-height:28.6px">£0.00</div>
<div class="c" style="left:973px;top:432.0px;width:104px;height:26.0px;line-height:28.6px">£4.79</div>
<div class="c" style="left:1077px;top:432.0px;width:111px;height:26.0px;line-height:28.6px">£1.83</div>
<div class="c" style="left:1188px;top:432.0px;width:108px;height:26.0px;line-height:28.6px">£1.63</div>
<div class="c" style="left:1513px;top:432.0px;width:81px;height:26.0px;line-height:28.6px">£7.98</div>
<div class="c" style="left:1594px;top:432.0px;width:163px;height:26.0px;line-height:28.6px">£6.33</div>
<div class="c" style="left:567px;top:458.0px;width:89px;height:26.0px;line-height:28.6px">£9.89</div>
<div class="c" style="left:656px;top:458.0px;width:68.5px;height:26.0px;line-height:28.6px">£5.08</div>
<div class="c" style="left:724.5px;top:458.0px;width:125.5px;height:26.0px;line-height:28.6px">£6.10</div>
<div class="c" style="left:850px;top:458.0px;width:123px;height:26.0px;line-height:28.6px">£0.00</div>
<div class="c" style="left:973px;top:458.0px;width:104px;height:26.0px;line-height:28.6px">£0.99</div>
<div class="c" style="left:1077px;top:458.0px;width:111px;height:26.0px;line-height:28.6px">£0.54</div>
<div class="c" style="left:1188px;top:458.0px;width:108px;height:26.0px;line-height:28.6px">£1.63</div>
<div class="c" style="left:1513px;top:458.0px;width:81px;height:26.0px;line-height:28.6px">£1.65</div>
<div class="c" style="left:1594px;top:458.0px;width:163px;height:26.0px;line-height:28.6px">£1.02</div>
<div class="c" style="left:567px;top:484.0px;width:89px;height:26.0px;line-height:28.6px">£37.89</div>
<div class="c" style="left:656px;top:484.0px;width:68.5px;height:26.0px;line-height:28.6px">£58.32</div>
<div class="c" style="left:724.5px;top:484.0px;width:125.5px;height:26.0px;line-height:28.6px">£69.98</div>
<div class="c" style="left:850px;top:484.0px;width:123px;height:26.0px;line-height:28.6px">£0.00</div>
<div class="c" style="left:973px;top:484.0px;width:104px;height:26.0px;line-height:28.6px">£3.79</div>
<div class="c" style="left:1077px;top:484.0px;width:111px;height:26.0px;line-height:28.6px">£1.49</div>
<div class="c" style="left:1188px;top:484.0px;width:108px;height:26.0px;line-height:28.6px">-£32.02</div>
<div class="c" style="left:1513px;top:484.0px;width:81px;height:26.0px;line-height:28.6px">£6.32</div>
<div class="c" style="left:1594px;top:484.0px;width:163px;height:26.0px;line-height:28.6px">£11.66</div>
<div class="c" style="left:567px;top:510.0px;width:89px;height:26.0px;line-height:28.6px">£112.89</div>
<div class="c" style="left:656px;top:510.0px;width:68.5px;height:26.0px;line-height:28.6px">£74.98</div>
<div class="c" style="left:724.5px;top:510.0px;width:125.5px;height:26.0px;line-height:28.6px">£89.98</div>
<div class="c" style="left:850px;top:510.0px;width:123px;height:26.0px;line-height:28.6px">£0.00</div>
<div class="c" style="left:973px;top:510.0px;width:104px;height:26.0px;line-height:28.6px">£11.29</div>
<div class="c" style="left:1077px;top:510.0px;width:111px;height:26.0px;line-height:28.6px">£4.04</div>
<div class="c" style="left:1188px;top:510.0px;width:108px;height:26.0px;line-height:28.6px">£3.76</div>
<div class="c" style="left:1513px;top:510.0px;width:81px;height:26.0px;line-height:28.6px">£18.82</div>
<div class="c" style="left:1594px;top:510.0px;width:163px;height:26.0px;line-height:28.6px">£15.00</div>
<div class="c" style="left:567px;top:536.0px;width:89px;height:26.0px;line-height:28.6px">£53.89</div>
<div class="c" style="left:656px;top:536.0px;width:68.5px;height:26.0px;line-height:28.6px">£35.83</div>
<div class="c" style="left:724.5px;top:536.0px;width:125.5px;height:26.0px;line-height:28.6px">£42.99</div>
<div class="c" style="left:850px;top:536.0px;width:123px;height:26.0px;line-height:28.6px">£0.00</div>
<div class="c" style="left:973px;top:536.0px;width:104px;height:26.0px;line-height:28.6px">£5.39</div>
<div class="c" style="left:1077px;top:536.0px;width:111px;height:26.0px;line-height:28.6px">£2.03</div>
<div class="c" style="left:1188px;top:536.0px;width:108px;height:26.0px;line-height:28.6px">£1.66</div>
<div class="c" style="left:1513px;top:536.0px;width:81px;height:26.0px;line-height:28.6px">£8.98</div>
<div class="c" style="left:1594px;top:536.0px;width:163px;height:26.0px;line-height:28.6px">£7.17</div>
<div class="c" style="left:567px;top:562.0px;width:89px;height:26.0px;line-height:28.6px">£42.89</div>
<div class="c" style="left:656px;top:562.0px;width:68.5px;height:26.0px;line-height:28.6px">£28.26</div>
<div class="c" style="left:724.5px;top:562.0px;width:125.5px;height:26.0px;line-height:28.6px">£33.91</div>
<div class="c" style="left:850px;top:562.0px;width:123px;height:26.0px;line-height:28.6px">£0.00</div>
<div class="c" style="left:973px;top:562.0px;width:104px;height:26.0px;line-height:28.6px">£4.29</div>
<div class="c" style="left:1077px;top:562.0px;width:111px;height:26.0px;line-height:28.6px">£1.66</div>
<div class="c" style="left:1188px;top:562.0px;width:108px;height:26.0px;line-height:28.6px">£1.54</div>
<div class="c" style="left:1513px;top:562.0px;width:81px;height:26.0px;line-height:28.6px">£7.15</div>
<div class="c" style="left:1594px;top:562.0px;width:163px;height:26.0px;line-height:28.6px">£5.65</div>
<div class="c" style="left:567px;top:588.0px;width:89px;height:26.0px;line-height:28.6px">£28.50</div>
<div class="c" style="left:656px;top:588.0px;width:68.5px;height:26.0px;line-height:28.6px">£18.33</div>
<div class="c" style="left:724.5px;top:588.0px;width:125.5px;height:26.0px;line-height:28.6px">£21.99</div>
<div class="c" style="left:850px;top:588.0px;width:123px;height:26.0px;line-height:28.6px">£0.00</div>
<div class="c" style="left:973px;top:588.0px;width:104px;height:26.0px;line-height:28.6px">£2.85</div>
<div class="c" style="left:1077px;top:588.0px;width:111px;height:26.0px;line-height:28.6px">£1.17</div>
<div class="c" style="left:1188px;top:588.0px;width:108px;height:26.0px;line-height:28.6px">£1.41</div>
<div class="c" style="left:1513px;top:588.0px;width:81px;height:26.0px;line-height:28.6px">£4.75</div>
<div class="c" style="left:1594px;top:588.0px;width:163px;height:26.0px;line-height:28.6px">£3.67</div>
<div class="c" style="left:567px;top:614.0px;width:89px;height:26.0px;line-height:28.6px">£15.89</div>
<div class="c" style="left:656px;top:614.0px;width:68.5px;height:26.0px;line-height:28.6px">£9.16</div>
<div class="c" style="left:724.5px;top:614.0px;width:125.5px;height:26.0px;line-height:28.6px">£10.99</div>
<div class="c" style="left:850px;top:614.0px;width:123px;height:26.0px;line-height:28.6px">£0.00</div>
<div class="c" style="left:973px;top:614.0px;width:104px;height:26.0px;line-height:28.6px">£1.59</div>
<div class="c" style="left:1077px;top:614.0px;width:111px;height:26.0px;line-height:28.6px">£0.74</div>
<div class="c" style="left:1188px;top:614.0px;width:108px;height:26.0px;line-height:28.6px">£1.75</div>
<div class="c" style="left:1513px;top:614.0px;width:81px;height:26.0px;line-height:28.6px">£2.65</div>
<div class="c" style="left:1594px;top:614.0px;width:163px;height:26.0px;line-height:28.6px">£1.83</div>
<div class="c" style="left:567px;top:640.0px;width:89px;height:26.0px;line-height:28.6px">£21.89</div>
<div class="c" style="left:656px;top:640.0px;width:68.5px;height:26.0px;line-height:28.6px">£13.96</div>
<div class="c" style="left:724.5px;top:640.0px;width:125.5px;height:26.0px;line-height:28.6px">£16.75</div>
<div class="c" style="left:850px;top:640.0px;width:123px;height:26.0px;line-height:28.6px">£0.00</div>
<div class="c" style="left:973px;top:640.0px;width:104px;height:26.0px;line-height:28.6px">£2.19</div>
<div class="c" style="left:1077px;top:640.0px;width:111px;height:26.0px;line-height:28.6px">£0.94</div>
<div class="c" style="left:1188px;top:640.0px;width:108px;height:26.0px;line-height:28.6px">£1.15</div>
<div class="c" style="left:1513px;top:640.0px;width:81px;height:26.0px;line-height:28.6px">£3.65</div>
<div class="c" style="left:1594px;top:640.0px;width:163px;height:26.0px;line-height:28.6px">£2.79</div>
<div class="c" style="left:567px;top:666.0px;width:89px;height:26.0px;line-height:28.6px">£20.89</div>
<div class="c" style="left:656px;top:666.0px;width:68.5px;height:26.0px;line-height:28.6px">£13.13</div>
<div class="c" style="left:724.5px;top:666.0px;width:125.5px;height:26.0px;line-height:28.6px">£15.75</div>
<div class="c" style="left:850px;top:666.0px;width:123px;height:26.0px;line-height:28.6px">£0.00</div>
<div class="c" style="left:973px;top:666.0px;width:104px;height:26.0px;line-height:28.6px">£2.09</div>
<div class="c" style="left:1077px;top:666.0px;width:111px;height:26.0px;line-height:28.6px">£0.91</div>
<div class="c" style="left:1188px;top:666.0px;width:108px;height:26.0px;line-height:28.6px">£1.28</div>
<div class="c" style="left:1513px;top:666.0px;width:81px;height:26.0px;line-height:28.6px">£3.48</div>
<div class="c" style="left:1594px;top:666.0px;width:163px;height:26.0px;line-height:28.6px">£2.63</div>
<div class="c" style="left:567px;top:692.0px;width:89px;height:26.0px;line-height:28.6px">£21.89</div>
<div class="c" style="left:656px;top:692.0px;width:68.5px;height:26.0px;line-height:28.6px">£13.59</div>
<div class="c" style="left:724.5px;top:692.0px;width:125.5px;height:26.0px;line-height:28.6px">£16.31</div>
<div class="c" style="left:850px;top:692.0px;width:123px;height:26.0px;line-height:28.6px">£0.00</div>
<div class="c" style="left:973px;top:692.0px;width:104px;height:26.0px;line-height:28.6px">£2.19</div>
<div class="c" style="left:1077px;top:692.0px;width:111px;height:26.0px;line-height:28.6px">£0.94</div>
<div class="c" style="left:1188px;top:692.0px;width:108px;height:26.0px;line-height:28.6px">£1.52</div>
<div class="c" style="left:1513px;top:692.0px;width:81px;height:26.0px;line-height:28.6px">£3.65</div>
<div class="c" style="left:1594px;top:692.0px;width:163px;height:26.0px;line-height:28.6px">£2.72</div>
<div class="c" style="left:567px;top:718.0px;width:89px;height:26.0px;line-height:28.6px">£12.89</div>
<div class="c" style="left:656px;top:718.0px;width:68.5px;height:26.0px;line-height:28.6px">£7.17</div>
<div class="c" style="left:724.5px;top:718.0px;width:125.5px;height:26.0px;line-height:28.6px">£8.60</div>
<div class="c" style="left:850px;top:718.0px;width:123px;height:26.0px;line-height:28.6px">£0.00</div>
<div class="c" style="left:973px;top:718.0px;width:104px;height:26.0px;line-height:28.6px">£1.29</div>
<div class="c" style="left:1077px;top:718.0px;width:111px;height:26.0px;line-height:28.6px">£0.64</div>
<div class="c" style="left:1188px;top:718.0px;width:108px;height:26.0px;line-height:28.6px">£1.65</div>
<div class="c" style="left:1513px;top:718.0px;width:81px;height:26.0px;line-height:28.6px">£2.15</div>
<div class="c" style="left:1594px;top:718.0px;width:163px;height:26.0px;line-height:28.6px">£1.43</div>
<div class="c" style="left:567px;top:744.0px;width:89px;height:26.0px;line-height:28.6px">£11.89</div>
<div class="c" style="left:656px;top:744.0px;width:68.5px;height:26.0px;line-height:28.6px">£6.66</div>
<div class="c" style="left:724.5px;top:744.0px;width:125.5px;height:26.0px;line-height:28.6px">£7.99</div>
<div class="c" style="left:850px;top:744.0px;width:123px;height:26.0px;line-height:28.6px">£0.00</div>
<div class="c" style="left:973px;top:744.0px;width:104px;height:26.0px;line-height:28.6px">£1.19</div>
<div class="c" style="left:1077px;top:744.0px;width:111px;height:26.0px;line-height:28.6px">£0.60</div>
<div class="c" style="left:1188px;top:744.0px;width:108px;height:26.0px;line-height:28.6px">£1.46</div>
<div class="c" style="left:1513px;top:744.0px;width:81px;height:26.0px;line-height:28.6px">£1.98</div>
<div class="c" style="left:1594px;top:744.0px;width:163px;height:26.0px;line-height:28.6px">£1.33</div>
<div class="c" style="left:567px;top:770.0px;width:89px;height:26.0px;line-height:28.6px">£28.89</div>
<div class="c" style="left:656px;top:770.0px;width:68.5px;height:26.0px;line-height:28.6px">£18.33</div>
<div class="c" style="left:724.5px;top:770.0px;width:125.5px;height:26.0px;line-height:28.6px">£22.00</div>
<div class="c" style="left:850px;top:770.0px;width:123px;height:26.0px;line-height:28.6px">£0.00</div>
<div class="c" style="left:973px;top:770.0px;width:104px;height:26.0px;line-height:28.6px">£2.89</div>
<div class="c" style="left:1077px;top:770.0px;width:111px;height:26.0px;line-height:28.6px">£1.18</div>
<div class="c" style="left:1188px;top:770.0px;width:108px;height:26.0px;line-height:28.6px">£1.67</div>
<div class="c" style="left:1513px;top:770.0px;width:81px;height:26.0px;line-height:28.6px">£4.82</div>
<div class="c" style="left:1594px;top:770.0px;width:163px;height:26.0px;line-height:28.6px">£3.67</div>
<div class="c" style="left:567px;top:796.0px;width:89px;height:26.0px;line-height:28.6px">£16.89</div>
<div class="c" style="left:656px;top:796.0px;width:68.5px;height:26.0px;line-height:28.6px">£9.79</div>
<div class="c" style="left:724.5px;top:796.0px;width:125.5px;height:26.0px;line-height:28.6px">£11.75</div>
<div class="c" style="left:850px;top:796.0px;width:123px;height:26.0px;line-height:28.6px">£0.00</div>
<div class="c" style="left:973px;top:796.0px;width:104px;height:26.0px;line-height:28.6px">£1.69</div>
<div class="c" style="left:1077px;top:796.0px;width:111px;height:26.0px;line-height:28.6px">£0.77</div>
<div class="c" style="left:1188px;top:796.0px;width:108px;height:26.0px;line-height:28.6px">£1.68</div>
<div class="c" style="left:1513px;top:796.0px;width:81px;height:26.0px;line-height:28.6px">£2.82</div>
<div class="c" style="left:1594px;top:796.0px;width:163px;height:26.0px;line-height:28.6px">£1.96</div>
</div><div class="h2" style="left:45px;width:300px"><span style="transform:scale(0.984,.945)">Product Description</span></div>
<div class="h2" style="left:342px;width:55px"><span style="transform:scale(0.94,.945)">QTY</span></div>
<div class="h2" style="left:402px;width:76px"><span style="transform:scale(1.0,.945)">Date</span></div>
<div class="h2" style="left:482px;width:85px"><span style="transform:scale(0.958,.945)">Source</span></div>
<div class="h2" style="left:571.5px;width:84.5px"><span style="transform:scale(0.95,.945)">Selling Price</span></div>
<div class="h2" style="left:660.5px;width:64px"><span style="transform:scale(0.914,.945)">Cost</span></div>
<div class="h2" style="left:729px;width:120px"><span style="transform:scale(0.94,.945)">Cost + VAT</span></div>
<div class="h2" style="left:854.5px;width:118px"><span style="transform:scale(0.94,.945)">Shipping Costs</span></div>
<div class="h2" style="left:978px;width:99px"><span style="transform:scale(0.935,.945)">Ebay Fees</span></div>
<div class="h2" style="left:1082px;width:105px"><span style="transform:scale(0.951,.945)">Paypal Fees</span></div>
<div class="h2" style="left:1193px;width:100px"><span style="transform:scale(1.0,.945)">Profit</span></div>
<div class="h2" style="left:1301px;width:119px"><span style="transform:scale(0.975,.945)">Source Order #</span></div>
<div class="h2" style="left:1425px;width:88px"><span style="transform:scale(0.985,.945)">Comments</span></div>
<div class="h2a" style="left:1518px">Sale VAT</div>
<div class="h2a" style="left:1599px">Buy VAT</div>
<div class="h2a" style="left:1762px">VAT</div>
<div class="h1" style="left:274.5px;width:120px;color:#fff"><span style="transform:scaleY(.93)">0</span></div>
<div class="h1" style="left:533px;width:120px;color:#fff"><span style="transform:scaleY(.93)">£2,390.99</span></div>
<div class="h1" style="left:726.5px;width:120px;color:#fff"><span style="transform:scaleY(.93)">£1,514.28</span></div>
<div class="h1" style="left:850px;width:120px;color:#fff"><span style="transform:scaleY(.93)">£0.00</span></div>
<div class="h1" style="left:954.5px;width:120px;color:#f00"><span style="transform:scaleY(.93)">£239.10</span></div>
<div class="h1" style="left:1064.5px;width:120px;color:#fff"><span style="transform:scaleY(.93)">£100.29</span></div>
<div class="h1" style="left:1172.5px;width:120px;color:#fff"><span style="transform:scaleY(.93)">£391.20</span></div>
<div class="abs" style="left:40px;top:205px;width:299px;height:27px;border:2px solid #1a73e8;border-left:none"></div>
<div class="abs" style="left:331.5px;top:224.5px;width:13px;height:13px;border-radius:50%;background:#0b57d0;border:1.2px solid #fff"></div>
<div class="blur" style="left:32px;top:273px;width:542.6px;height:527.6px;clip-path:polygon(0 0,542.6px 0,542.6px 13.6px,538.2px 13.6px,538.2px 528px,1.5px 528px,1.5px 14px,0 14px);background:linear-gradient(180deg,#e0e0e0 0,#e9e9e9 30px,#ececec 60px,#ebebeb 90px,#dfdfdf 118px,#dedede 132px,#eeeeee 165px,#f8f8f8 200px,#f9f9f9 225px,#f0f0f0 262px,#efefef 280px,#f6f6f6 320px,#f5f5f5 360px,#f1f1f1 395px,#f3f3f3 420px,#fbfbfb 460px,#fff 505px)">
<div class="bb" style="left:0;top:0;width:542px;height:60px;background:linear-gradient(180deg,rgba(0,0,0,.38) 0,rgba(0,0,0,.28) 7px,rgba(0,0,0,.17) 17px,rgba(0,0,0,.085) 29px,rgba(0,0,0,.035) 42px,rgba(0,0,0,0) 60px)"></div>
<div class="bb" style="left:0;top:0;width:542px;height:60px;background:radial-gradient(ellipse 150px 34px at 175px 0,rgba(0,0,0,.16),rgba(0,0,0,0)),radial-gradient(ellipse 110px 38px at 420px 0,rgba(0,0,0,.2),rgba(0,0,0,0)),radial-gradient(ellipse 70px 44px at 0 0,rgba(255,255,255,.42),rgba(255,255,255,0))"></div>
<div class="bb" style="left:440px;top:0;width:98.2px;height:260px;background:radial-gradient(ellipse 46px 135px at 100% 30%,rgba(0,0,0,.25) 0,rgba(0,0,0,.175) 25%,rgba(0,0,0,.10) 50%,rgba(0,0,0,.045) 72%,rgba(0,0,0,.012) 90%,rgba(0,0,0,0) 100%)"></div>
<div class="bb" style="left:0;top:80px;width:542px;height:90px;background:radial-gradient(ellipse 80px 30px at 100% 50%,rgba(0,0,0,.09) 0,rgba(0,0,0,.06) 30%,rgba(0,0,0,.025) 62%,rgba(0,0,0,.006) 88%,rgba(0,0,0,0) 100%),radial-gradient(ellipse 120px 28px at 70px 50%,rgba(0,0,0,.035),rgba(0,0,0,0))"></div>
<div class="bb" style="left:150px;top:25px;width:360px;height:90px;background:radial-gradient(ellipse 150px 40px at 55% 50%,rgba(255,255,255,.4) 0,rgba(255,255,255,.25) 40%,rgba(255,255,255,.08) 75%,rgba(255,255,255,0) 100%)"></div>
<div class="bb" style="left:0;top:215px;width:542px;height:110px;background:radial-gradient(ellipse 55px 34px at 55px 50%,rgba(0,0,0,.07),rgba(0,0,0,0)),radial-gradient(ellipse 55px 36px at 222px 55%,rgba(0,0,0,.06),rgba(0,0,0,0)),radial-gradient(ellipse 50px 30px at 352px 52%,rgba(0,0,0,.035),rgba(0,0,0,0)),radial-gradient(ellipse 40px 26px at 470px 45%,rgba(0,0,0,.02),rgba(0,0,0,0))"></div>
<div class="bb" style="left:0;top:340px;width:542px;height:120px;background:radial-gradient(ellipse 55px 40px at 60px 50%,rgba(0,0,0,.045),rgba(0,0,0,0)),radial-gradient(ellipse 55px 40px at 208px 50%,rgba(0,0,0,.045),rgba(0,0,0,0))"></div>
</div>
<div class="blur" style="z-index:3;left:1297.2px;top:273px;width:214.6px;height:540.5px;background:linear-gradient(180deg,#e2e2e2 0,#ececec 30px,#f0f0f0 70px,#eeeeee 100px,#e2e2e2 122px,#e2e2e2 134px,#eeeeee 165px,#f7f7f7 200px,#f6f6f6 235px,#efefef 265px,#f4f4f4 310px,#f5f5f5 380px,#f8f8f8 430px,#fbfbfb 480px,#f7f7f7 541px)">
<div class="bb" style="left:0;top:0;width:215px;height:60px;background:linear-gradient(180deg,rgba(0,0,0,.34) 0,rgba(0,0,0,.22) 6px,rgba(0,0,0,.10) 16px,rgba(0,0,0,.04) 28px,rgba(0,0,0,0) 44px)"></div>
<div class="bb" style="left:0;top:0;width:215px;height:541px;background:linear-gradient(90deg,rgba(0,0,0,.25) 0,rgba(0,0,0,.15) 7px,rgba(0,0,0,.07) 17px,rgba(0,0,0,.02) 30px,rgba(0,0,0,0) 46px,rgba(0,0,0,0) 190px,rgba(0,0,0,.05) 206px,rgba(0,0,0,.10) 215px);-webkit-mask-image:linear-gradient(180deg,rgba(0,0,0,.3) 0,#000 60px,#000 170px,rgba(0,0,0,.6) 330px,rgba(0,0,0,.25) 440px,rgba(0,0,0,0) 520px);mask-image:linear-gradient(180deg,rgba(0,0,0,.3) 0,#000 60px,#000 170px,rgba(0,0,0,.6) 330px,rgba(0,0,0,.25) 440px,rgba(0,0,0,0) 520px)"></div>
<div class="bb" style="left:0;top:215px;width:215px;height:110px;background:radial-gradient(ellipse 70px 36px at 95px 50%,rgba(0,0,0,.055),rgba(0,0,0,0))"></div>
</div>
<div class="wm" style="left:619.5px;top:415px;word-spacing:6px;letter-spacing:-.8px">© Oghale</div>
<div class="wm" style="left:590px;top:553px;letter-spacing:-.9px">Okpolokpo</div>
<div class="bl" style="left:580px;width:520px;top:431px;height:1px;opacity:.72"></div>
<div class="bl" style="left:580px;width:520px;top:457px;height:1px;opacity:.72"></div>
<div class="bl" style="left:580px;width:520px;top:483px;height:1px;opacity:.72"></div>
<div class="bl" style="left:580px;width:520px;top:509px;height:1px;opacity:.72"></div>
<div class="bl" style="left:580px;width:520px;top:535px;height:1px;opacity:.72"></div>
<div class="bl" style="left:580px;width:520px;top:561px;height:1px;opacity:.72"></div>
<div class="bl" style="left:580px;width:520px;top:587px;height:1px;opacity:.72"></div>
<div class="bl" style="left:580px;width:520px;top:613px;height:1px;opacity:.72"></div>
<div class="bl" style="left:580px;width:520px;top:639px;height:1px;opacity:.72"></div>
<div class="bl" style="left:580px;width:520px;top:665px;height:1px;opacity:.72"></div>
<div class="bl" style="left:580px;width:520px;top:691px;height:1px;opacity:.72"></div>
<div class="bl" style="left:656px;top:425px;width:1px;height:260px;opacity:.72"></div>
<div class="bl" style="left:724px;top:425px;width:1px;height:260px;opacity:.72"></div>
<div class="bl" style="left:850px;top:425px;width:1px;height:260px;opacity:.72"></div>
<div class="bl" style="left:973px;top:425px;width:1px;height:260px;opacity:.72"></div>
<div class="bl" style="left:1077px;top:425px;width:1px;height:260px;opacity:.72"></div>
<div class="bl" style="left:338px;top:271px;width:1px;height:2.2px"></div>
<div class="bl" style="left:397px;top:271px;width:1px;height:2.2px"></div>
<div class="bl" style="left:478px;top:271px;width:1px;height:2.2px"></div>
<div class="bl" style="left:1420px;top:271px;width:1px;height:2.2px"></div>
<div class="bl" style="left:338px;top:800.5px;width:1px;height:5px"></div>
<div class="bl" style="left:397px;top:800.5px;width:1px;height:5px"></div>
<div class="bl" style="left:478px;top:800.5px;width:1px;height:5px"></div>
<div class="bl" style="left:567px;top:800.5px;width:1px;height:5px"></div>

<!-- ===== bottom ===== -->
<div class="abs" style="left:0;top:805px;width:1773px;height:17px;background:#fff;border-top:1px solid #dcdcdc"></div>
<div class="abs" style="left:0;top:806px;width:40px;height:15px;background:#f8f9fa"></div>
<div class="abs" style="left:40px;top:800px;width:1px;height:21px;background:#d5d5d5"></div>
<div class="abs" style="left:43px;top:807px;width:1107px;height:12px;border-radius:6px;background:#dadce0"></div>
<div class="abs" style="left:0;top:821px;width:1773px;height:1px;background:#e3e5e8"></div>
<div class="abs" style="left:149px;top:822px;width:176px;height:35px;background:#e1e9f7"></div>
<svg class="ic" style="left:0;top:822px" width="1773" height="35" viewBox="0 822 1773 35" fill="none" stroke="#444746" stroke-width="1.8">
<path d="M52.8 844.9H65.8M59.3 838.4V851.4" stroke-width="1.9"/>
<path d="M100.1 840.2H117.8M100.1 845H117.8M100.1 849.8H117.8" stroke-width="1.9"/>
<path d="M300.5 843h10l-5 5.4z" fill="#0b57d0" stroke="none"/>
<path d="M464.5 843h10l-5 5.4z" fill="#444746" stroke="none"/>
<path d="M633.5 843h10l-5 5.4z" fill="#444746" stroke="none"/>
<path d="M788.5 843h10l-5 5.4z" fill="#444746" stroke="none"/>
<path d="M901.5 843h10l-5 5.4z" fill="#444746" stroke="none"/>
</svg>
<div class="tab" style="left:164px;color:#0b57d0;letter-spacing:.22px">Profit Tracker</div>
<div class="tab" style="left:338.6px;font-weight:normal;letter-spacing:.78px">Performance</div>
<div class="tab" style="left:504.6px;font-weight:normal;letter-spacing:.52px">Formula Help</div>
<div class="tab" style="left:672.6px;font-weight:normal;letter-spacing:.88px">List of sites</div>
<div class="tab" style="left:828.4px;font-weight:normal;letter-spacing:.16px">Sheet1</div>

</body></html>
